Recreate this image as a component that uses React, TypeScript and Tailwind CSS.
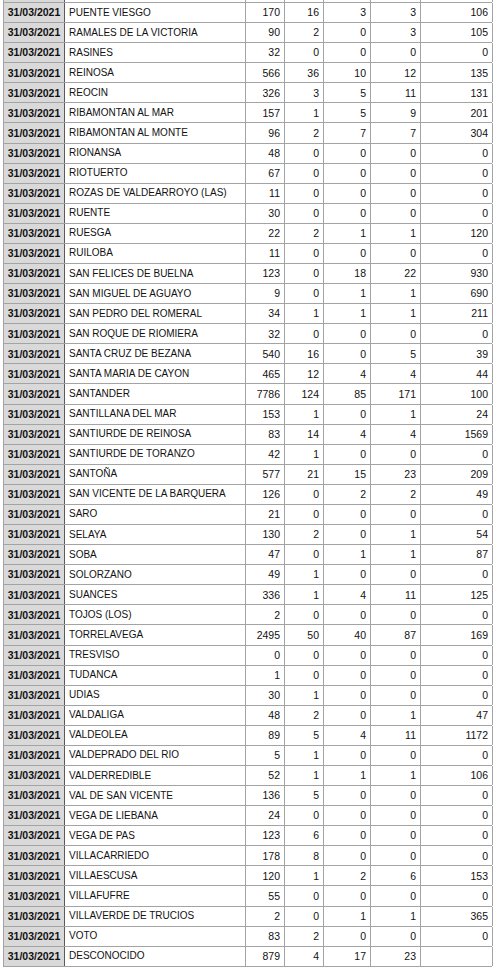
import React from "react";

type Row = [string, string, string, string, string, string];

const rows: Row[] = [
  ["PUENTE VIESGO", "170", "16", "3", "3", "106"],
  ["RAMALES DE LA VICTORIA", "90", "2", "0", "3", "105"],
  ["RASINES", "32", "0", "0", "0", "0"],
  ["REINOSA", "566", "36", "10", "12", "135"],
  ["REOCIN", "326", "3", "5", "11", "131"],
  ["RIBAMONTAN AL MAR", "157", "1", "5", "9", "201"],
  ["RIBAMONTAN AL MONTE", "96", "2", "7", "7", "304"],
  ["RIONANSA", "48", "0", "0", "0", "0"],
  ["RIOTUERTO", "67", "0", "0", "0", "0"],
  ["ROZAS DE VALDEARROYO (LAS)", "11", "0", "0", "0", "0"],
  ["RUENTE", "30", "0", "0", "0", "0"],
  ["RUESGA", "22", "2", "1", "1", "120"],
  ["RUILOBA", "11", "0", "0", "0", "0"],
  ["SAN FELICES DE BUELNA", "123", "0", "18", "22", "930"],
  ["SAN MIGUEL DE AGUAYO", "9", "0", "1", "1", "690"],
  ["SAN PEDRO DEL ROMERAL", "34", "1", "1", "1", "211"],
  ["SAN ROQUE DE RIOMIERA", "32", "0", "0", "0", "0"],
  ["SANTA CRUZ DE BEZANA", "540", "16", "0", "5", "39"],
  ["SANTA MARIA DE CAYON", "465", "12", "4", "4", "44"],
  ["SANTANDER", "7786", "124", "85", "171", "100"],
  ["SANTILLANA DEL MAR", "153", "1", "0", "1", "24"],
  ["SANTIURDE DE REINOSA", "83", "14", "4", "4", "1569"],
  ["SANTIURDE DE TORANZO", "42", "1", "0", "0", "0"],
  ["SANTOÑA", "577", "21", "15", "23", "209"],
  ["SAN VICENTE DE LA BARQUERA", "126", "0", "2", "2", "49"],
  ["SARO", "21", "0", "0", "0", "0"],
  ["SELAYA", "130", "2", "0", "1", "54"],
  ["SOBA", "47", "0", "1", "1", "87"],
  ["SOLORZANO", "49", "1", "0", "0", "0"],
  ["SUANCES", "336", "1", "4", "11", "125"],
  ["TOJOS (LOS)", "2", "0", "0", "0", "0"],
  ["TORRELAVEGA", "2495", "50", "40", "87", "169"],
  ["TRESVISO", "0", "0", "0", "0", "0"],
  ["TUDANCA", "1", "0", "0", "0", "0"],
  ["UDIAS", "30", "1", "0", "0", "0"],
  ["VALDALIGA", "48", "2", "0", "1", "47"],
  ["VALDEOLEA", "89", "5", "4", "11", "1172"],
  ["VALDEPRADO DEL RIO", "5", "1", "0", "0", "0"],
  ["VALDERREDIBLE", "52", "1", "1", "1", "106"],
  ["VAL DE SAN VICENTE", "136", "5", "0", "0", "0"],
  ["VEGA DE LIEBANA", "24", "0", "0", "0", "0"],
  ["VEGA DE PAS", "123", "6", "0", "0", "0"],
  ["VILLACARRIEDO", "178", "8", "0", "0", "0"],
  ["VILLAESCUSA", "120", "1", "2", "6", "153"],
  ["VILLAFUFRE", "55", "0", "0", "0", "0"],
  ["VILLAVERDE DE TRUCIOS", "2", "0", "1", "1", "365"],
  ["VOTO", "83", "2", "0", "0", "0"],
  ["DESCONOCIDO", "879", "4", "17", "23", ""],
];

function TableRow({ r, hidden }: { r: Row; hidden?: boolean }) {
  const t = hidden ? "invisible" : "";
  return (
    <div className="grid grid-cols-[61px_181px_39px_39px_47px_50px_72px] h-[20.09px] border-b border-[#a3a3a3]">
      <div className="bg-[#d9d9d9] border-r border-r-[#5a5a5a] flex items-center justify-center font-bold text-[10.5px]">
        <span className={t}>31/03/2021</span>
      </div>
      <div className="border-r border-[#a3a3a3] flex items-center pl-[4px] text-[10px] whitespace-nowrap overflow-hidden">
        <span className={t}>{r[0]}</span>
      </div>
      {r.slice(1).map((v, i) => (
        <div
          key={i}
          className="border-r border-[#a3a3a3] flex items-center justify-end pr-[4px] text-[10.5px]"
        >
          <span className={t}>{v}</span>
        </div>
      ))}
    </div>
  );
}

export default function App() {
  return (
    <div className="w-[495px] h-[967px] overflow-hidden bg-white">
      <div
        className="ml-[3px] w-[489px] border-l border-[#a3a3a3] mt-[-17.09px] text-[#111] leading-none"
        style={{ fontFamily: '"Liberation Sans", Arial, Helvetica, sans-serif' }}
      >
        <TableRow r={["POTES", "", "", "", "", ""]} hidden />
        {rows.map((r, i) => (
          <TableRow key={i} r={r} />
        ))}
        <TableRow r={["", "", "", "", "", ""]} hidden />
      </div>
    </div>
  );
}
